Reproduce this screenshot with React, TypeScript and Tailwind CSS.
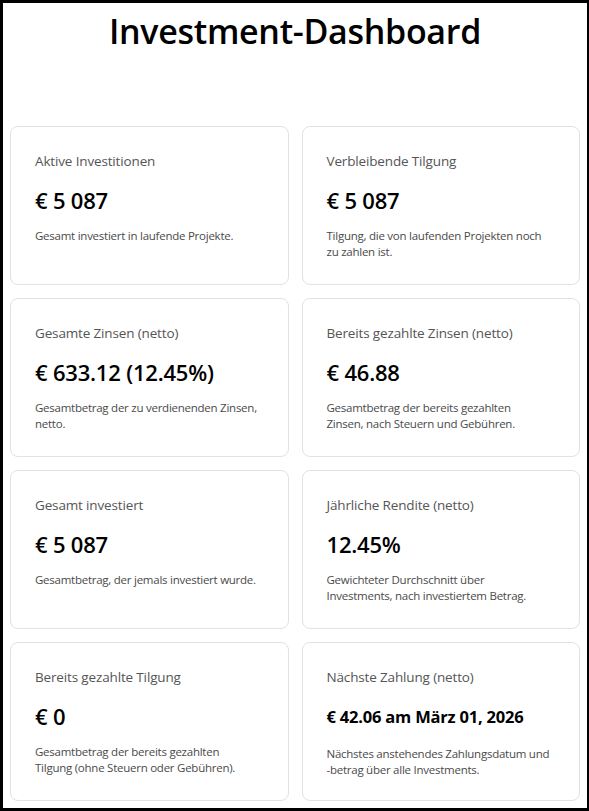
import React from "react";

type Card = { label: string; value: string; desc: string[]; small?: boolean };

const cards: Card[] = [
  { label: "Aktive Investitionen", value: "€ 5 087", desc: ["Gesamt investiert in laufende Projekte."] },
  { label: "Verbleibende Tilgung", value: "€ 5 087", desc: ["Tilgung, die von laufenden Projekten noch", "zu zahlen ist."] },
  { label: "Gesamte Zinsen (netto)", value: "€ 633.12 (12.45%)", desc: ["Gesamtbetrag der zu verdienenden Zinsen,", "netto."] },
  { label: "Bereits gezahlte Zinsen (netto)", value: "€ 46.88", desc: ["Gesamtbetrag der bereits gezahlten", "Zinsen, nach Steuern und Gebühren."] },
  { label: "Gesamt investiert", value: "€ 5 087", desc: ["Gesamtbetrag, der jemals investiert wurde."] },
  { label: "Jährliche Rendite (netto)", value: "12.45%", desc: ["Gewichteter Durchschnitt über", "Investments, nach investiertem Betrag."] },
  { label: "Bereits gezahlte Tilgung", value: "€ 0", desc: ["Gesamtbetrag der bereits gezahlten", "Tilgung (ohne Steuern oder Gebühren)."] },
  { label: "Nächste Zahlung (netto)", value: "€ 42.06 am März 01, 2026", desc: ["Nächstes anstehendes Zahlungsdatum und", "-betrag über alle Investments."], small: true },
];

export default function App() {
  return (
    <div
      className="w-[589px] h-[811px] overflow-hidden bg-white border-[3px] border-r-2 border-black"
      style={{ fontFamily: '"Open Sans", "Noto Sans", sans-serif' }}
    >
      <h1 className="text-center text-[34px] font-semibold leading-[48px] text-black pt-[4px] tracking-[-0.3px]">
        Investment-Dashboard
      </h1>
      <div className="grid grid-cols-2 gap-[13px] px-[7px] mt-[71px]">
        {cards.map((c, i) => (
          <div key={i} className="h-[159px] rounded-lg border border-[#e2e2e2] px-6 pt-6">
            <div className="text-[13.5px] leading-5 text-[#555] tracking-[-0.15px]">{c.label}</div>
            {c.small ? (
              <div className="mt-[18px] text-[16.5px] leading-[24px] font-bold text-black tracking-[-0.2px]">{c.value}</div>
            ) : (
              <div className="mt-[14px] text-[22px] leading-[30px] font-semibold text-black tracking-[-0.2px]">{c.value}</div>
            )}
            <div className={`${c.small ? "mt-[17px]" : "mt-[13px]"} text-[11.5px] leading-4 text-[#4a4a4a] tracking-[-0.25px]`}>
              {c.desc.map((l, j) => (
                <div key={j} className="whitespace-nowrap">{l}</div>
              ))}
            </div>
          </div>
        ))}
      </div>
    </div>
  );
}
